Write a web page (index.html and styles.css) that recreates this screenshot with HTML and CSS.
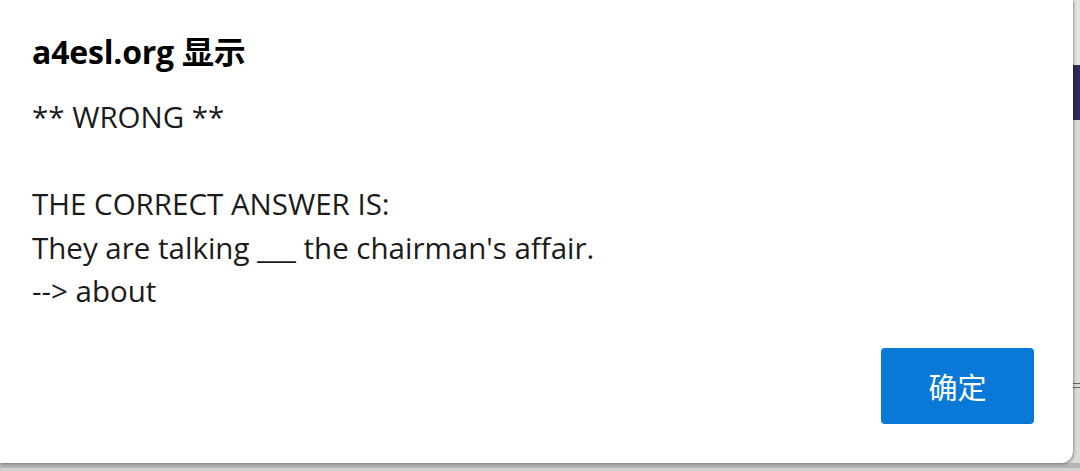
FILE: index.html
```html
<!DOCTYPE html>
<html lang="zh-CN">
<head>
<meta charset="utf-8">
<title>a4esl.org 显示</title>
<link rel="stylesheet" href="styles.css">
</head>
<body>
<div class="screen">
  <div class="row">
    <div class="dialog">
      <h1 class="title">a4esl.org 显示</h1>
      <div class="message">** WRONG **

THE CORRECT ANSWER IS:
They are talking ___ the chairman's affair.
--&gt; about</div>
      <div class="actions">
        <button class="ok">确定</button>
      </div>
    </div>
    <div class="strip">
      <div class="strip-top"></div>
      <div class="strip-navy"></div>
      <div class="strip-mid"></div>
      <div class="strip-mark"></div>
      <div class="strip-rest"></div>
    </div>
  </div>
  <div class="bottom"></div>
</div>
</body>
</html>
```
FILE: styles.css
```css
html, body {
  margin: 0;
  padding: 0;
  background: #d9d9d4;
}
.screen {
  width: 1080px;
  height: 471px;
  display: flex;
  flex-direction: column;
  overflow: hidden;
}
.row {
  display: flex;
  height: 463px;
}
.dialog {
  flex: 1;
  background: #ffffff;
  border-bottom-right-radius: 12px;
  box-shadow: 1px 1px 3px rgba(0,0,0,0.35);
  position: relative;
  z-index: 1;
  display: flex;
  flex-direction: column;
  padding: 30px 39px 39px 32px;
  box-sizing: border-box;
  font-family: "Open Sans", "Noto Sans CJK SC", sans-serif;
}
.title {
  margin: 0;
  font-size: 32px;
  font-weight: 700;
  color: #000;
  line-height: 44px;
  letter-spacing: -0.2px;
  font-family: "Open Sans", "Noto Sans CJK SC", sans-serif;
}
.message {
  margin-top: 21px;
  white-space: pre-wrap;
  font-size: 29.5px;
  line-height: 43.5px;
  color: #1b1b1b;
}
.actions {
  margin-top: auto;
  display: flex;
  justify-content: flex-end;
}
.ok {
  width: 153px;
  height: 76px;
  border: none;
  border-radius: 4px;
  background: #0a78d6;
  color: #ffffff;
  font-family: "Noto Sans CJK SC", sans-serif;
  font-size: 29px;
  padding: 0;
}
.strip {
  width: 7px;
  display: flex;
  flex-direction: column;
}
.strip-top {
  height: 65px;
  background: #e4e4dc;
}
.strip-navy {
  height: 55px;
  background: #2c2a5e;
}
.strip-mid {
  height: 262px;
  background: #dcdcd6;
}
.strip-mark {
  height: 8px;
  background: repeating-linear-gradient(#dcdcd6 0 1px, #6a6a6a 1px 2px, #dcdcd6 2px 4px);
}
.strip-rest {
  flex: 1;
  background: #dcdcd6;
}
.bottom {
  flex: 1;
  background: linear-gradient(#b5b5b5 0 5px, #d2d2d2 5px);
}
```
